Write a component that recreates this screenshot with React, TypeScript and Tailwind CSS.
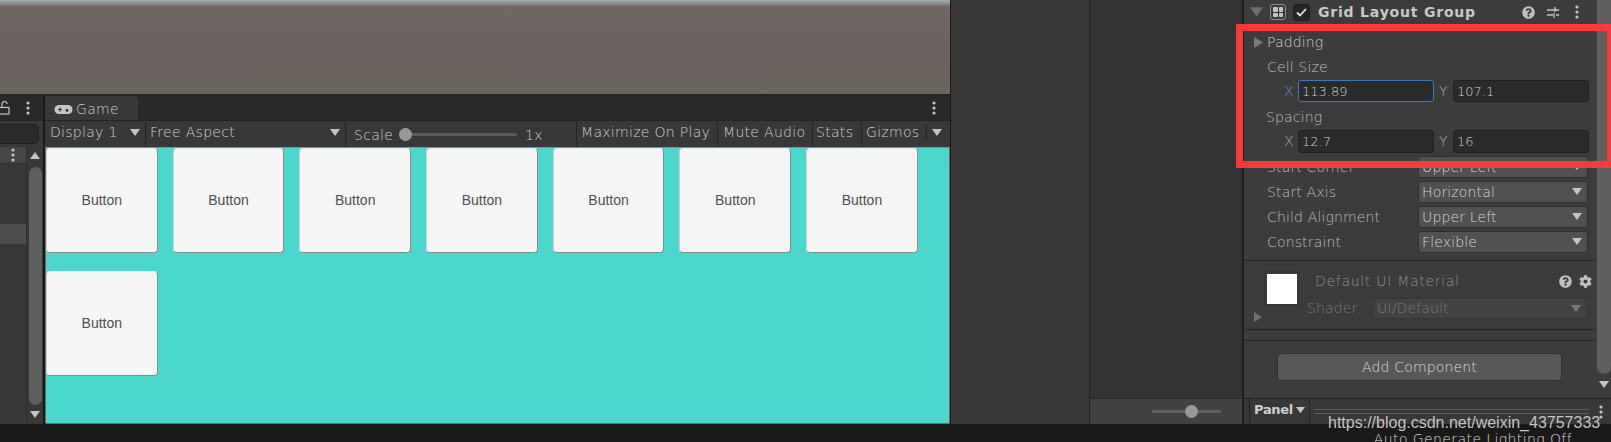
import React from 'react';
import { FaQuestionCircle, FaCog } from 'react-icons/fa';

const Tri = ({ dir = 'down', size = 10, color = '#c4c4c4' }: { dir?: 'down' | 'up' | 'right'; size?: number; color?: string }) => {
  const pts = dir === 'down' ? '0,1 10,1 5,8' : dir === 'up' ? '0,8 10,8 5,1' : '1,0 9,5 1,10';
  return (
    <svg width={size} height={size} viewBox="0 0 10 10" className="shrink-0">
      <polygon points={pts} fill={color} />
    </svg>
  );
};

const Kebab = ({ color = '#c4c4c4' }: { color?: string }) => (
  <svg width="4" height="14" viewBox="0 0 4 14" className="shrink-0">
    <circle cx="2" cy="2" r="1.6" fill={color} />
    <circle cx="2" cy="7" r="1.6" fill={color} />
    <circle cx="2" cy="12" r="1.6" fill={color} />
  </svg>
);

const GameButton = () => (
  <div className="h-[105px] rounded-[4px] bg-[#f5f5f5] border border-[#8a8a8a] border-t-[#e8e8e8] border-l-[#d0d0d0] flex items-center justify-center font-['Liberation_Sans',sans-serif] font-normal tracking-normal text-[14px] text-[#505050]">
    Button
  </div>
);

const ToolItem = ({ label, className, caret }: { label: string; className: string; caret?: boolean }) => (
  <div className={`h-full flex items-center justify-between border-r border-[#242424] pr-[5px] pb-[3px] ${className}`}>
    {label}
    {caret && <Tri />}
  </div>
);

const NumberField = ({ axis, value, focused }: { axis: string; value: string; focused?: boolean }) => (
  <div className="flex items-center">
    <span className={`w-[14px] ${focused ? 'text-[#5b8fc9]' : 'text-[#a8a8a8]'}`}>{axis}</span>
    <div className={`w-[136px] h-full min-h-[22px] rounded-[3px] bg-[#2a2a2a] border flex items-center pl-[3px] pt-[1px] text-[13px] tracking-normal ${focused ? 'border-[#3a79bb]' : 'border-[#212121]'}`}>
      {value}
    </div>
  </div>
);

const DropdownRow = ({ label, value }: { label: string; value: string }) => (
  <div className="h-[25px] flex items-start pl-[23px]">
    <span className="w-[151px] h-[22px] flex items-center text-[#bdbdbd]">{label}</span>
    <div className="w-[170px] h-[22px] rounded-[3px] bg-[#515151] border border-[#303030] flex items-center justify-between pl-[3px] pr-[5px] text-[#d8d8d8]">
      {value}
      <Tri />
    </div>
  </div>
);

export default function App() {
  return (
    <div className="w-[1611px] h-[442px] overflow-hidden relative bg-[#191919] flex flex-col font-['DejaVu_Sans',sans-serif] font-extralight text-[14px] tracking-[0.3px] text-[#d0d0d0] whitespace-nowrap">
      <div className="h-[424px] shrink-0 flex">
        {/* scene view and the panels below it */}
        <div className="w-[950px] shrink-0 flex flex-col bg-[#1f1f1f]">
          <div className="h-[94px] bg-[linear-gradient(to_bottom,#a3adad_0px,#8d9291_3px,#6e6764_7px,#6b635f_50%,#6a645f_100%)]" />
          <div className="h-[2px] bg-[#232323]" />
          <div className="flex-1 flex">
            <div className="w-[43px] flex flex-col bg-[#383838]">
              <div className="h-[24px] bg-[#292929] flex items-center justify-between pr-[13px]">
                <svg width="11" height="14" viewBox="0 0 11 14" fill="none" stroke="#c4c4c4" strokeWidth="1.2">
                  <rect x="-3" y="6.5" width="12" height="6.5" />
                  <path d="M2 6.5V3a2.5 2.5 0 0 1 5 0" />
                </svg>
                <Kebab />
              </div>
              <div className="h-[27px] flex items-center pr-[4px] border-t border-[#242424]">
                <div className="w-full h-[20px] rounded-r-[5px] bg-[#2a2a2a] border border-[#212121] border-l-0" />
              </div>
              <div className="flex-1 flex">
                <div className="w-[27px] flex flex-col border-r border-[#2f2f2f]">
                  <div className="h-[17px] bg-[#464646] flex items-center justify-center border-b border-[#303030]">
                    <Kebab />
                  </div>
                  <div className="h-[60px]" />
                  <div className="h-[20px] bg-[#4d4d4d]" />
                </div>
                <div className="flex-1 flex flex-col items-center pt-[4px]">
                  <Tri dir="up" />
                  <div className="mt-[6px] w-[13px] flex-1 rounded-[7px] bg-[#5f5f5f]" />
                  <div className="h-[19px] flex items-center">
                    <Tri />
                  </div>
                </div>
              </div>
            </div>
            <div className="w-[2px] bg-[#191919]" />

            {/* game view */}
            <div className="flex-1 min-w-0 flex flex-col">
              <div className="h-[24px] bg-[#292929] flex justify-between">
                <div className="w-[93px] rounded-t-[3px] bg-[#383838] flex items-center pl-[9px] pt-[3px] gap-[3px]">
                  <svg width="19" height="11" viewBox="0 0 19 11">
                    <rect x="0.5" y="1" width="18" height="9" rx="4.5" fill="#c4c4c4" />
                    <path d="M4 5.5h4M6 3.5v4" stroke="#333" strokeWidth="1.2" />
                    <circle cx="13" cy="6.5" r="1.4" fill="#333" />
                  </svg>
                  Game
                </div>
                <div className="flex items-center pr-[14px]">
                  <Kebab />
                </div>
              </div>
              <div className="h-[27px] bg-[#383838] border-t border-[#242424] flex items-center">
                <ToolItem label="Display 1" className="w-[101px] pl-[5px]" caret />
                <ToolItem label="Free Aspect" className="w-[200px] pl-[4px]" caret />
                <div className="w-[231px] h-full flex items-center border-r border-[#242424] pl-[8px]">
                  <span className="w-[45px] pt-[3px]">Scale</span>
                  <div className="relative w-[118px] h-[3px] bg-[#5a5a5a] rounded-full">
                    <div className="absolute left-0 top-[-5px] w-[13px] h-[13px] rounded-full bg-[#999999]" />
                  </div>
                  <span className="ml-[8px] pt-[3px]">1x</span>
                </div>
                <ToolItem label="Maximize On Play" className="w-[141px] pl-[4px]" />
                <ToolItem label="Mute Audio" className="w-[95px] pl-[5px]" />
                <ToolItem label="Stats" className="w-[49px] pl-[3px]" />
                <div className="flex-1 h-full flex items-center pl-[4px] pb-[3px]">
                  Gizmos
                  <div className="ml-[7px] w-px h-[16px] bg-[#242424]" />
                  <div className="ml-[5px]">
                    <Tri />
                  </div>
                </div>
              </div>
              <div className="flex-1 bg-[#4bd6ce] border border-[#6a6a6a] border-t-[#7c8fb0] rounded-b-[2px] grid grid-cols-[repeat(7,111.7px)] auto-rows-[105px] gap-x-[15px] gap-y-[17.5px] content-start">
                {Array.from({ length: 8 }).map((_, i) => (
                  <GameButton key={i} />
                ))}
              </div>
            </div>
          </div>
        </div>

        <div className="w-px shrink-0 bg-[#191919]" />
        {/* empty hierarchy and project panels */}
        <div className="w-[138px] shrink-0 bg-[#383838]" />
        <div className="w-[153px] shrink-0 flex flex-col bg-[#333333] border-l border-[#252525]">
          <div className="flex-1" />
          <div className="h-[26px] bg-[#414141] border-t border-[#2b2b2b] flex items-center pl-[62px]">
            <div className="relative w-[69px] h-[3px] bg-[#5f5f5f]">
              <div className="absolute left-[33px] top-[-5px] w-[13px] h-[13px] rounded-full bg-[#999999]" />
            </div>
          </div>
        </div>
        <div className="w-[2px] shrink-0 bg-[#1f1f1f]" />

        {/* inspector */}
        <div className="flex-1 min-w-0 flex flex-col bg-[#3c3c3c] tracking-[0.15px]">
          <div className="flex-1 flex min-h-0">
            <div className="flex-1 flex flex-col min-w-0">
              <div className="h-[24px] flex items-center pl-[6px]">
                <Tri size={13} color="#6e6e6e" />
                <div className="ml-[7px] w-[16px] h-[16px] rounded-[3px] border border-[#8a8a8a] grid grid-cols-2 gap-[1px] p-[2px]">
                  <div className="bg-[#c4c4c4] rounded-[1px]" />
                  <div className="bg-[#c4c4c4] rounded-[1px]" />
                  <div className="bg-[#c4c4c4] rounded-[1px]" />
                  <div className="bg-[#c4c4c4] rounded-[1px]" />
                </div>
                <div className="ml-[7px] w-[17px] h-[17px] rounded-[3px] bg-[#262626] border border-[#1e1e1e] flex items-center justify-center">
                  <svg width="11" height="9" viewBox="0 0 11 9" fill="none" stroke="#e6e6e6" strokeWidth="1.8">
                    <path d="M1 4.5 4 7.5 10 1" />
                  </svg>
                </div>
                <span className="ml-[8px] font-bold tracking-[0.8px] text-[#c8c8c8]">Grid Layout Group</span>
                <FaQuestionCircle className="ml-[46px] text-[13px] text-[#c0c0c0]" />
                <svg width="14" height="13" viewBox="0 0 14 13" className="ml-[11px]" stroke="#c0c0c0" fill="none" strokeWidth="1.3">
                  <path d="M1 4h12M1 9h6M10 9h3M9 1v5M8 7v5" />
                </svg>
                <div className="ml-[15px]">
                  <Kebab />
                </div>
              </div>
              <div className="h-[30px] mt-[3px] mb-[1px] flex items-center pl-[9px]">
                <Tri dir="right" color="#7c7c7c" size={11} />
                <span className="ml-[3px]">Padding</span>
              </div>
              <div className="h-[18px] flex items-center pl-[23px] text-[#bdbdbd]">Cell Size</div>
              <div className="h-[30px] pt-[4px] pb-[4px] pl-[40px] flex gap-[5px]">
                <NumberField axis="X" value="113.89" focused />
                <NumberField axis="Y" value="107.1" />
              </div>
              <div className="h-[22px] flex items-center pl-[22px] text-[#bdbdbd]">Spacing</div>
              <div className="h-[28px] pt-[2px] pb-[3px] pl-[40px] flex gap-[5px]">
                <NumberField axis="X" value="12.7" />
                <NumberField axis="Y" value="16" />
              </div>
              <DropdownRow label="Start Corner" value="Upper Left" />
              <DropdownRow label="Start Axis" value="Horizontal" />
              <DropdownRow label="Child Alignment" value="Upper Left" />
              <DropdownRow label="Constraint" value="Flexible" />
              <div className="h-[5px] border-b border-[#242424]" />

              {/* default material */}
              <div className="h-[69px] border-b border-[#242424] flex">
                <div className="w-[23px] flex flex-col justify-end items-end pb-[7px] pr-[4px]">
                  <Tri dir="right" color="#6e6e6e" />
                </div>
                <div className="w-[30px] h-[30px] mt-[13px] bg-white shadow-[0_0_0_3px_#383838]" />
                <div className="flex-1 flex flex-col pl-[10px] pt-[10px]">
                  <div className="h-[20px] flex items-center pl-[8px]">
                    <span className="text-[#8e8e8e] tracking-[0.7px]">Default UI Material</span>
                    <FaQuestionCircle className="ml-[99px] text-[13px] text-[#c0c0c0]" />
                    <FaCog className="ml-[7px] text-[13px] text-[#c0c0c0]" />
                  </div>
                  <div className="h-[21px] mt-[7px] flex items-center">
                    <span className="w-[66px] text-[#777777]">Shader</span>
                    <div className="w-[214px] h-full rounded-[3px] bg-[#434343] border border-[#383838] flex items-center justify-between pl-[3px] pr-[5px] text-[#787878]">
                      UI/Default
                      <Tri color="#777777" />
                    </div>
                  </div>
                </div>
              </div>
              <div className="h-[11px] border-b border-[#242424]" />
              <div className="pl-[33px] pt-[12px]">
                <div className="w-[285px] h-[28px] rounded-[4px] bg-[#585858] border border-[#303030] flex items-center justify-center text-[#dcdcdc]">
                  Add Component
                </div>
              </div>
            </div>
            <div className="w-[16px] shrink-0 flex flex-col items-center pl-[2px]">
              <div className="w-[14px] h-[374px] rounded-b-[7px] bg-[#5f5f5f]" />
              <div className="mt-[6px]">
                <Tri />
              </div>
            </div>
          </div>
          <div className="h-[26px] bg-[#383838] border-t border-[#242424] flex items-center pl-[5px]">
            <div className="h-full w-[61px] border-x border-[#242424] pl-[4px] pb-[3px] flex items-center gap-[3px] font-bold text-[13px] tracking-[-0.3px]">
              Panel
              <Tri size={9} />
            </div>
            <div className="ml-[4px] w-[275px] h-[5px] border-y border-[#5c5c5c]" />
            <div className="ml-[10px]">
              <Kebab />
            </div>
          </div>
        </div>
      </div>

      <div className="h-[18px] overflow-hidden flex justify-end pr-[39px] pt-[5px] tracking-[0.4px] text-[#dadada]">
        Auto Generate Lighting Off
      </div>

      {/* highlight frame and page watermark on top of the editor */}
      <div className="absolute left-[1236px] top-[24px] w-[375px] h-[144px] border-[7px] border-r-[4px] border-[#f63a3a]" />
      <div className="absolute left-[1328px] top-[411px] font-['Liberation_Sans',sans-serif] font-normal tracking-normal text-[16px] text-[#c4c4c4]">
        https://blog.csdn.net/weixin_43757333
      </div>
    </div>
  );
}
